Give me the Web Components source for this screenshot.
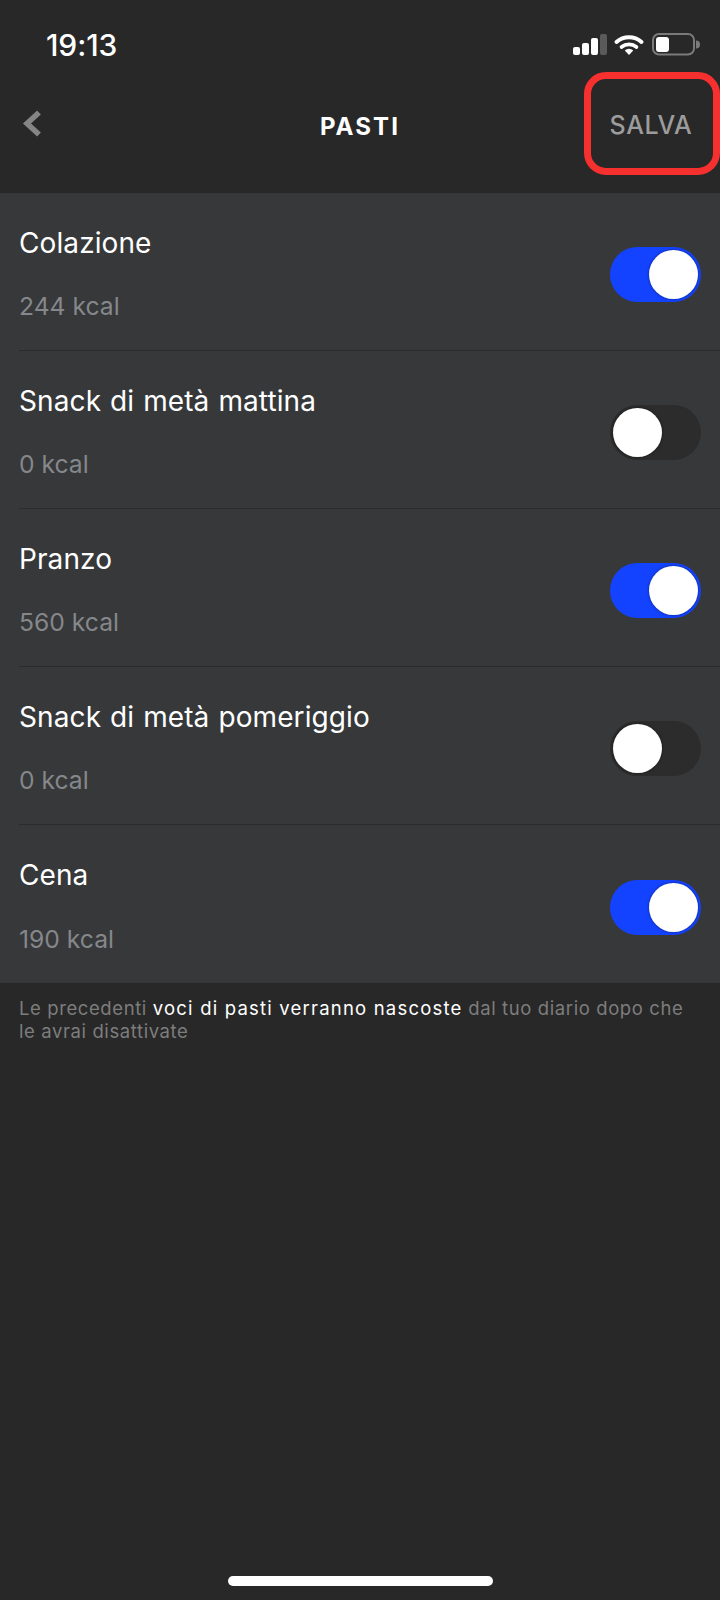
<!DOCTYPE html>
<html lang="it">
<head>
<meta charset="utf-8">
<title>Pasti</title>
<style>
  html, body { margin: 0; background: #282828; }
  body { width: 720px; height: 1600px; display: flex; flex-direction: column; font-family: Inter, "Liberation Sans", sans-serif; }
  home-bar { margin-top: auto; }
</style>
</head>
<body>
<status-bar></status-bar>
<top-bar>PASTI</top-bar>
<meal-list>
  <meal-row name="Colazione" kcal="244 kcal" on></meal-row>
  <meal-row name="Snack di metà mattina" kcal="0 kcal"></meal-row>
  <meal-row name="Pranzo" kcal="560 kcal" on></meal-row>
  <meal-row name="Snack di metà pomeriggio" kcal="0 kcal"></meal-row>
  <meal-row name="Cena" kcal="190 kcal" on last></meal-row>
</meal-list>
<foot-note>Le precedenti <b>voci di pasti verranno nascoste</b> dal tuo diario dopo che le avrai disattivate</foot-note>
<home-bar></home-bar>

<script>
class StatusBar extends HTMLElement {
  constructor() {
    super();
    this.attachShadow({ mode: "open" });
  }

  connectedCallback() {
    this.shadowRoot.innerHTML = `
      <style>
        :host { display: flex; height: 69px; justify-content: space-between; align-items: flex-start; padding: 0 20px 0 46px; box-sizing: border-box; }
        .time { color: #fff; font-size: 30px; line-height: 34px; font-weight: 500; margin-top: 28px; letter-spacing: -0.1px; }
        svg { margin-top: 32px; display: block; }
      </style>
      <div class="time">19:13</div>
      <svg width="130" height="24" viewBox="570 32 130 24">
        <rect x="573" y="47" width="7" height="8" rx="2" fill="#fff"/>
        <rect x="582" y="43" width="7" height="12" rx="2" fill="#fff"/>
        <rect x="591" y="38" width="7" height="17" rx="2" fill="#fff"/>
        <rect x="600" y="34" width="7" height="21" rx="2" fill="#5a5a5a"/>
        <path d="M616.500 42a19 19 0 0 1 25 0" fill="none" stroke="#fff" stroke-width="4" stroke-linecap="round"/>
        <path d="M621.500 47a12 12 0 0 1 15 0" fill="none" stroke="#fff" stroke-width="3.600" stroke-linecap="round"/>
        <path d="M629 55l-4.200-4.600a6 6 0 0 1 8.400 0z" fill="#fff"/>
        <rect x="653" y="34" width="41" height="20.500" rx="6" fill="none" stroke="#7a7a7a" stroke-width="2"/>
        <rect x="656" y="37" width="13" height="15" rx="3" fill="#fff"/>
        <path d="M696 40.500a4 4 0 0 1 0 8z" fill="#7a7a7a"/>
      </svg>
    `;
  }
}

class TopBar extends HTMLElement {
  constructor() {
    super();
    this.attachShadow({ mode: "open" });
  }

  connectedCallback() {
    this.shadowRoot.innerHTML = `
      <style>
        :host { display: grid; grid-template-columns: 1fr auto 1fr; align-items: center; height: 124px; padding: 3px 0 18px 0; box-sizing: border-box; }
        svg { display: block; margin-left: 22px; }
        .title { color: #fff; font-size: 24px; font-weight: 700; letter-spacing: 2.100px; margin-top: 6px; }
        .save { justify-self: end; width: 136px; height: 103px; box-sizing: border-box; border: 7px solid #f5302f; border-radius: 22px; display: flex; align-items: center; justify-content: center; color: #9c9c9c; font-size: 25px; font-weight: 500; letter-spacing: 0.600px; padding: 2px 2px 0 0; }
      </style>
      <svg width="20" height="30" viewBox="0 0 20 30"><path d="M17 3.500L5 14.500l12 11" fill="none" stroke="#858585" stroke-width="5.500"/></svg>
      <div class="title"><slot></slot></div>
      <div class="save">SALVA</div>
    `;
  }
}

class MealList extends HTMLElement {
  constructor() {
    super();
    this.attachShadow({ mode: "open" });
    this.shadowRoot.innerHTML = `
      <style>
        :host { display: block; background: #36383a; }
      </style>
      <slot></slot>
    `;
  }
}

class MealRow extends HTMLElement {
  constructor() {
    super();
    this.attachShadow({ mode: "open" });
  }

  connectedCallback() {
    this.shadowRoot.innerHTML = `
      <style>
        :host { display: block; padding-left: 19px; }
        .row { height: 158px; box-sizing: border-box; display: flex; align-items: center; justify-content: space-between; padding: 6px 19px 0 0; border-bottom: 1px solid #2b2b2c; }
        :host([last]) .row { border-bottom: 0; }
        .name { color: #fff; font-size: 28px; letter-spacing: 0.100px; word-spacing: 1px; line-height: 32px; margin-top: -1px; }
        .kcal { color: #85878a; font-size: 24.700px; line-height: 30px; margin-top: 32.500px; }
      </style>
      <div class="row">
        <div>
          <div class="name">${this.getAttribute("name")}</div>
          <div class="kcal">${this.getAttribute("kcal")}</div>
        </div>
        <meal-switch ${this.hasAttribute("on") ? "on" : ""}></meal-switch>
      </div>
    `;
  }
}

class MealSwitch extends HTMLElement {
  constructor() {
    super();
    this.attachShadow({ mode: "open" });
    this.shadowRoot.innerHTML = `
      <style>
        :host { display: flex; width: 91px; height: 55px; padding: 3px; box-sizing: border-box; border-radius: 28px; background: #2c2c2c; justify-content: flex-start; }
        :host([on]) { background: #1443ff; justify-content: flex-end; }
        .knob { width: 49px; height: 49px; border-radius: 50%; background: #fff; box-shadow: 0 0 3px rgba(0,0,0,.5); }
      </style>
      <div class="knob"></div>
    `;
  }
}

class FootNote extends HTMLElement {
  constructor() {
    super();
    this.attachShadow({ mode: "open" });
    this.shadowRoot.innerHTML = `
      <style>
        :host { display: block; padding: 14px 30px 0 19px; color: #7d7d7d; font-size: 18.500px; line-height: 23px; letter-spacing: 0.600px; }
        ::slotted(b) { color: #fff; font-weight: 400; letter-spacing: 1.200px; }
      </style>
      <slot></slot>
    `;
  }
}

class HomeBar extends HTMLElement {
  constructor() {
    super();
    this.attachShadow({ mode: "open" });
    this.shadowRoot.innerHTML = `
      <style>
        :host { display: flex; justify-content: center; padding-bottom: 14px; }
        div { width: 265px; height: 10px; border-radius: 5px; background: #fff; }
      </style>
      <div></div>
    `;
  }
}

customElements.define("status-bar", StatusBar);
customElements.define("top-bar", TopBar);
customElements.define("meal-list", MealList);
customElements.define("meal-row", MealRow);
customElements.define("meal-switch", MealSwitch);
customElements.define("foot-note", FootNote);
customElements.define("home-bar", HomeBar);
</script>
</body>
</html>
